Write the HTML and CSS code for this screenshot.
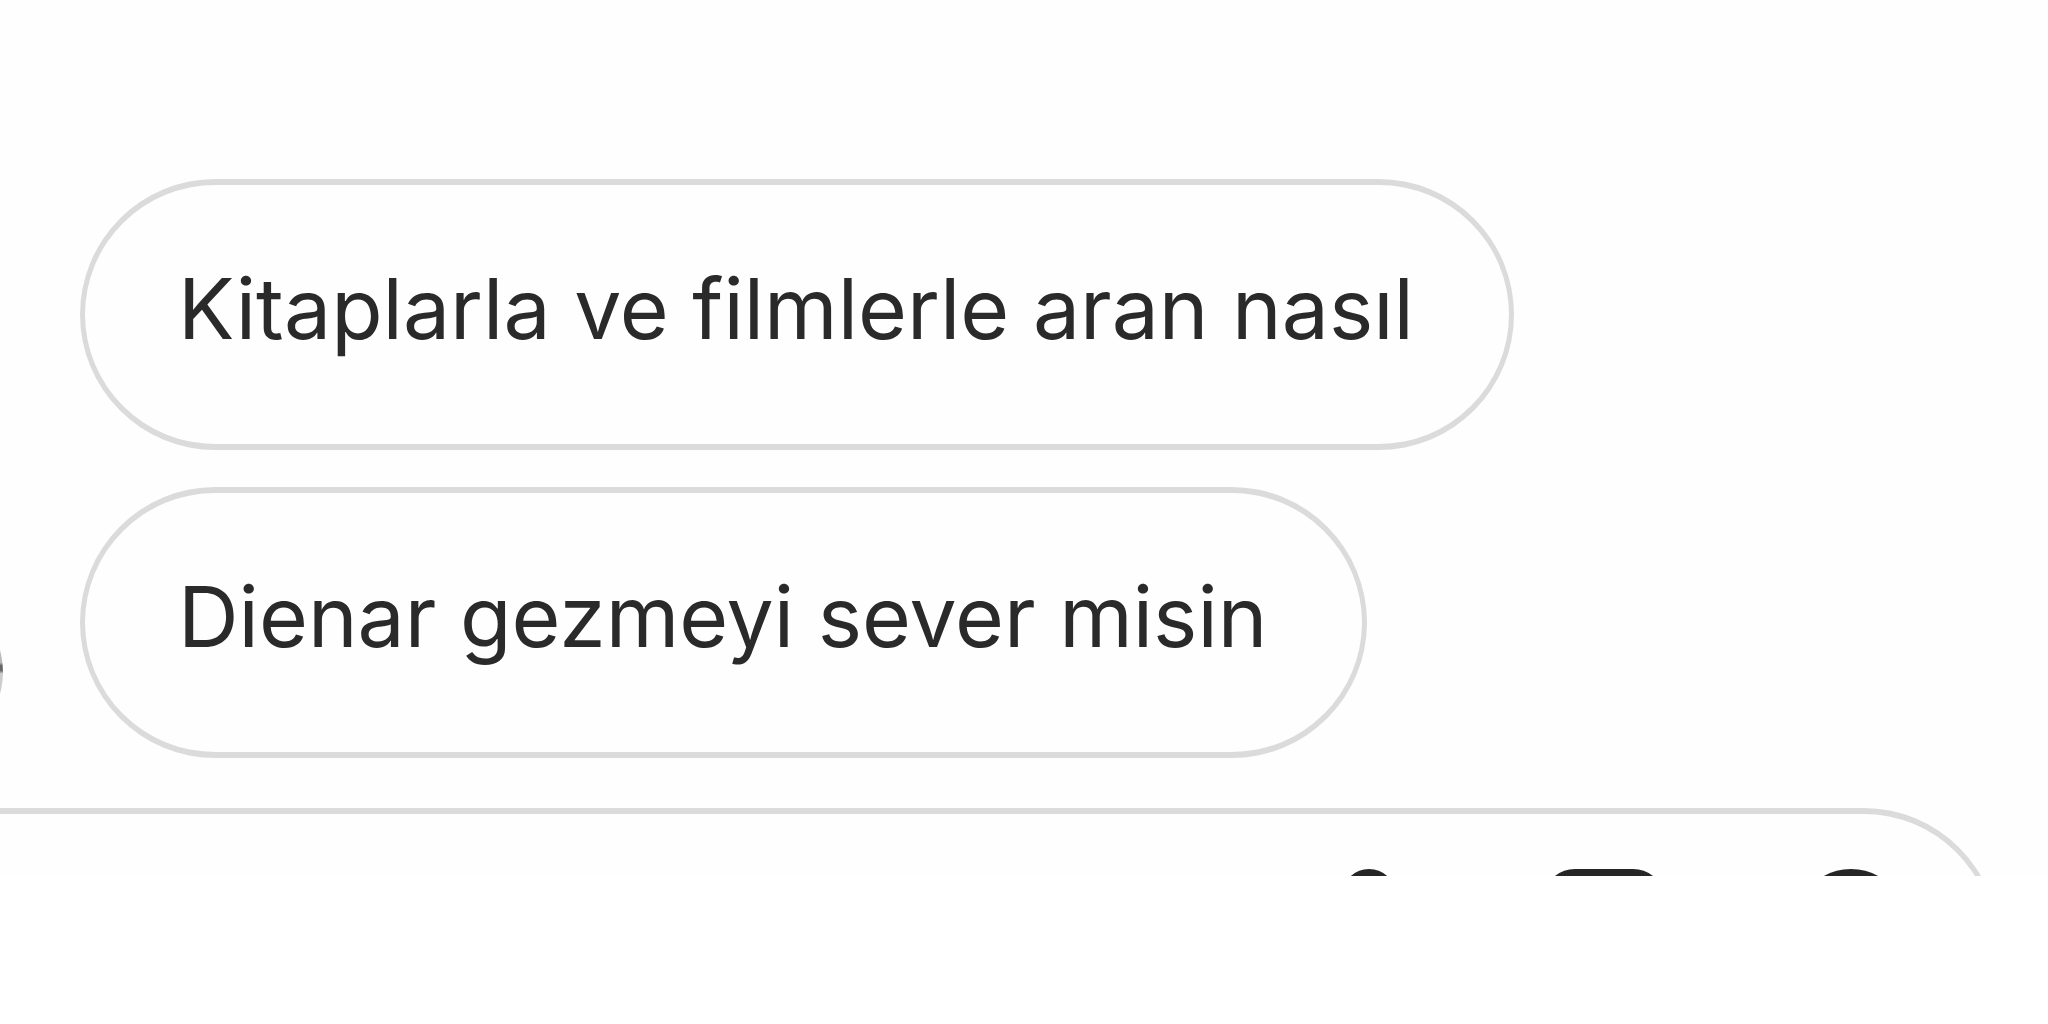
FILE: index.html
```html
<!DOCTYPE html>
<html lang="tr">
<head>
<meta charset="utf-8">
<meta name="viewport" content="width=device-width, initial-scale=1">
<title>Sohbet</title>
<link rel="stylesheet" href="styles.css">
</head>
<body>
<main class="chat">
  <section class="thread">
    <span class="avatar" aria-hidden="true"></span>
    <div class="messages">
      <p class="bubble">Kitaplarla ve filmlerle aran nasıl</p>
      <p class="bubble">Dienar gezmeyi sever misin</p>
    </div>
  </section>
  <div class="composer-peek">
    <form class="composer">
      <input class="composer-input" type="text" aria-label="Mesaj">
      <button class="tool tool-mic" type="button" aria-label="Ses kaydı">
        <svg viewBox="0 0 54 110" width="54" height="110"><rect x="4" y="4" width="46" height="80" rx="23"/></svg>
      </button>
      <button class="tool tool-photo" type="button" aria-label="Fotoğraf">
        <svg viewBox="0 0 122 110" width="122" height="110"><rect x="4" y="4" width="114" height="102" rx="28"/></svg>
      </button>
      <button class="tool" type="button" aria-label="Çıkartma">
        <svg viewBox="0 0 110 110" width="110" height="110"><circle cx="55" cy="55" r="51"/></svg>
      </button>
    </form>
  </div>
</main>
</body>
</html>
```
FILE: styles.css
```css
* {
  box-sizing: border-box;
}

body {
  margin: 0;
  background: #fff;
  color: #2a2a2a;
  font-family: Inter, "Liberation Sans", sans-serif;
}

.chat {
  padding-top: 179px;
  background: #fefefe;
  overflow: hidden;
}

.thread {
  display: flex;
  align-items: flex-end;
  gap: 77px;
}

/* Scrolled almost out of view on the left */
.avatar {
  flex: none;
  width: 160px;
  height: 160px;
  margin-left: -157px;
  margin-bottom: 6px;
  border-radius: 50%;
  background: linear-gradient(#bbb 44%, #666 46%, #666 49%, #ccc 51%);
}

.messages {
  display: flex;
  flex-direction: column;
  align-items: flex-start;
  gap: 37px;
}

.bubble {
  margin: 0;
  padding: 73px 95px 84px 93px;
  border: 6px solid #dbdbdb;
  border-width: 6px 5px;
  border-radius: 136px;
  font-size: 84px;
  line-height: 102px;
  white-space: nowrap;
}

/* Only the top edge of the composer shows */
.composer-peek {
  height: 118px;
  padding: 50px 49px 0 0;
  overflow: hidden;
}

.composer {
  display: flex;
  align-items: flex-start;
  height: 271px;
  margin-left: -136px;
  padding: 55px 88px 0 136px;
  border: 6px solid #dbdbdb;
  border-width: 6px 5px;
  border-radius: 136px;
}

.composer-input {
  flex: 1;
  min-width: 0;
  height: 110px;
  border: 0;
  outline: 0;
  background: transparent;
  font: inherit;
  font-size: 84px;
}

.tool {
  flex: none;
  padding: 0;
  border: 0;
  background: none;
}

.tool svg {
  display: block;
  fill: none;
  stroke: #262626;
  stroke-width: 8px;
}

.tool-mic {
  margin-right: 147px;
}

.tool-photo {
  margin-right: 131px;
}
```
